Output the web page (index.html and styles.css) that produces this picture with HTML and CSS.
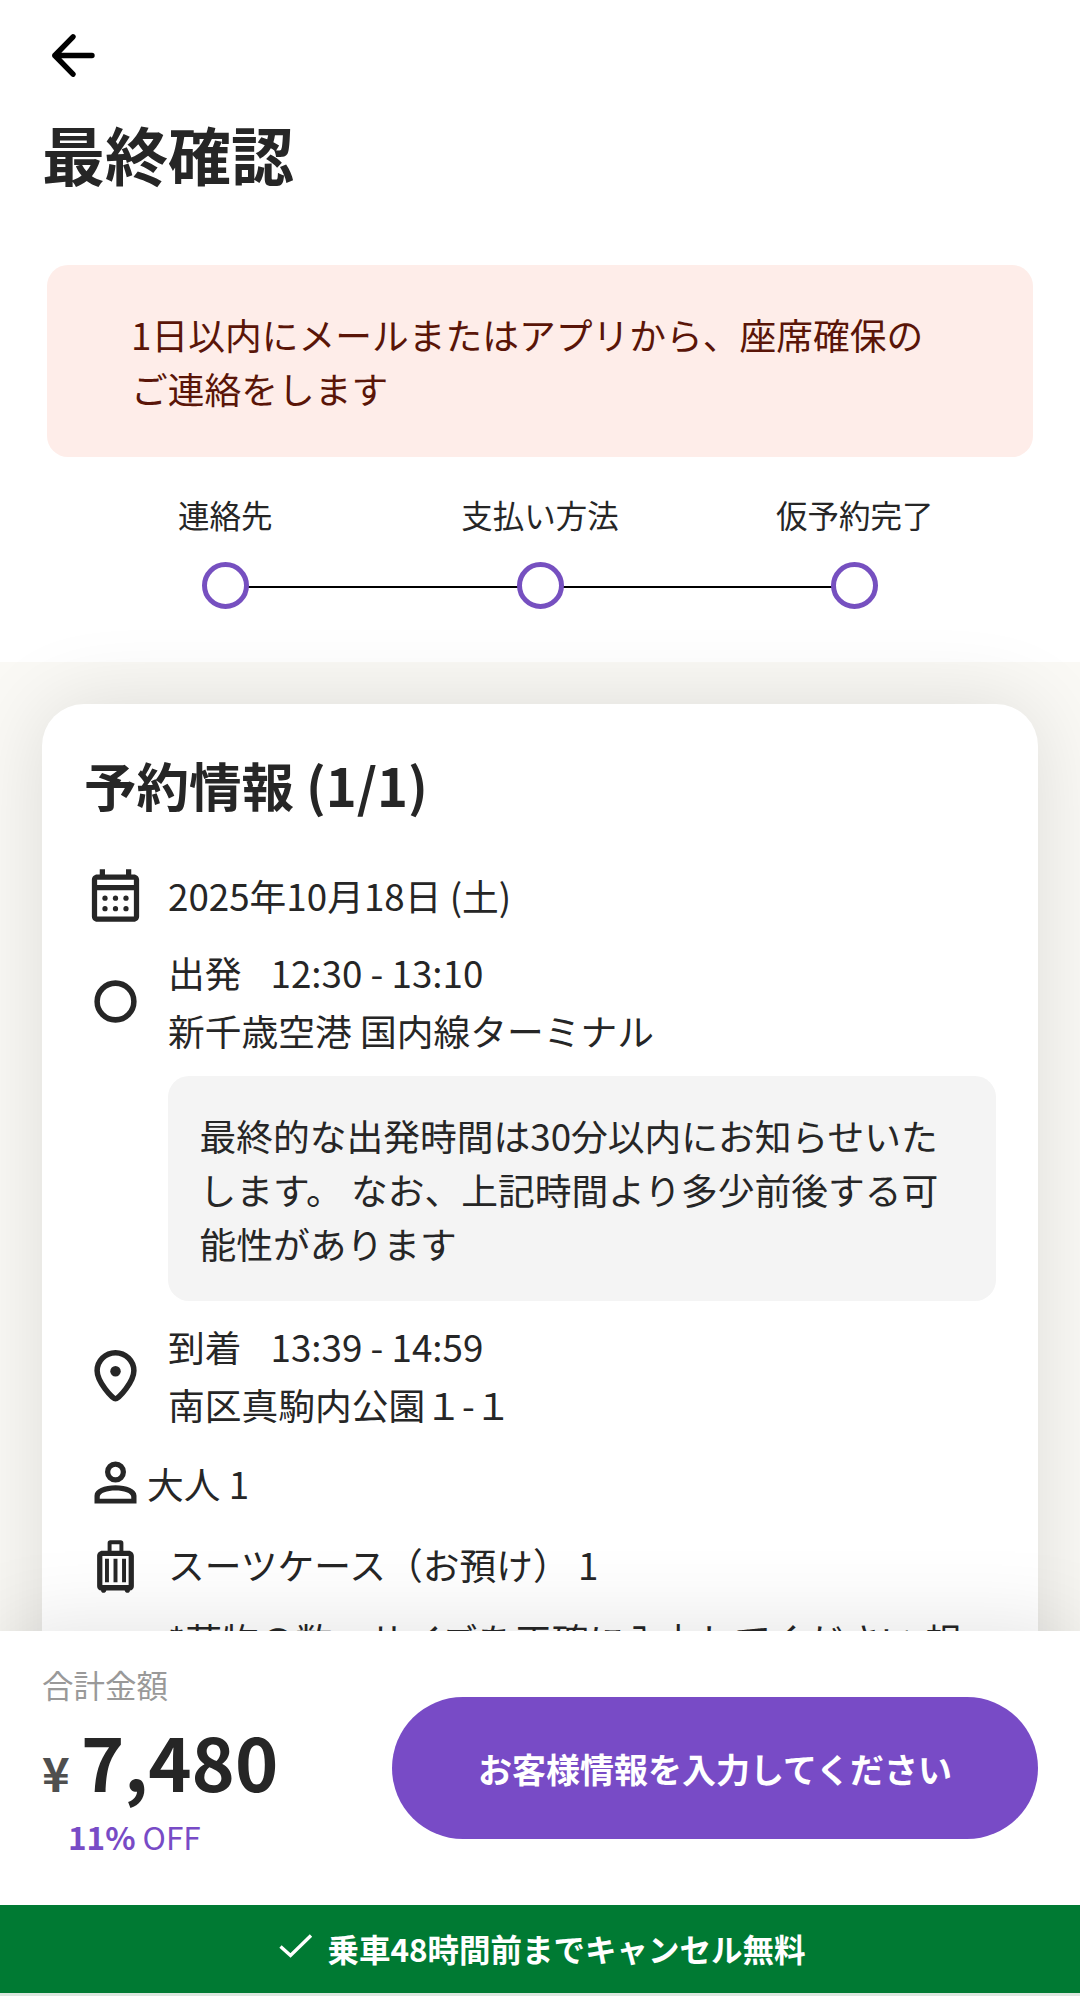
FILE: index.html
```html
<!DOCTYPE html>
<html lang="ja">
<head>
    <meta charset="UTF-8">
    <meta name="viewport" content="width=device-width, initial-scale=1.0">
    <title>最終確認</title>
    <link rel="stylesheet" href="styles.css">
</head>
<body>
    <main class="content">
        <header class="header">
            <svg class="icon" viewBox="0 0 63 63" fill="none" stroke="#000" stroke-width="5.4" stroke-linecap="round" stroke-linejoin="round">
                <path d="M50 31.5H12.8M31 12.8L12.8 31.5L31 50.2"/>
            </svg>
            <h1>最終確認</h1>
            <div class="alert">1日以内にメールまたはアプリから、座席確保の<br>ご連絡をします</div>
            <div class="steps">
                <div class="step"><span>連絡先</span><i class="dot"></i></div>
                <div class="step"><span>支払い方法</span><i class="dot"></i></div>
                <div class="step"><span>仮予約完了</span><i class="dot"></i></div>
            </div>
        </header>

        <div class="booking">
            <section class="card">
                <h2>予約情報 (1/1)</h2>
                <div class="row date">
                    <svg class="icon" viewBox="0 0 24 24" fill="#262626">
                        <path fill-rule="evenodd" d="M6 2h2v2h8V2h2v2h1c1.1 0 2 .9 2 2v14c0 1.1-.9 2-2 2H5c-1.1 0-2-.9-2-2V6c0-1.1.9-2 2-2h1zM5 6v2h14V6zM5 10v10h14V10z"/>
                        <circle cx="8" cy="13" r="1"/><circle cx="12" cy="13" r="1"/><circle cx="16" cy="13" r="1"/>
                        <circle cx="8" cy="17" r="1"/><circle cx="12" cy="17" r="1"/><circle cx="16" cy="17" r="1"/>
                    </svg>
                    <p>2025年10月18日 (土)</p>
                </div>
                <div class="row departure">
                    <svg class="icon" viewBox="0 0 24 24" fill="none" stroke="#262626" stroke-width="2.1">
                        <circle cx="12" cy="12" r="7"/>
                    </svg>
                    <div class="stop">
                        <p>出発<span class="time">12:30 - 13:10</span></p>
                        <p>新千歳空港 国内線ターミナル</p>
                    </div>
                </div>
                <div class="note">最終的な出発時間は30分以内にお知らせいた<br>します。 なお、上記時間より多少前後する可<br>能性があります</div>
                <div class="row arrival">
                    <svg class="icon" viewBox="0 0 24 24" fill="none" stroke="#262626" stroke-width="2.1">
                        <path d="M12 20.9C10.8 20.9 5 14.4 5 10.2A7 6.9 0 0 1 19 10.2C19 14.4 13.2 20.9 12 20.9z"/>
                        <circle cx="12" cy="10.4" r="2" fill="#262626" stroke="none"/>
                    </svg>
                    <div class="stop">
                        <p>到着<span class="time">13:39 - 14:59</span></p>
                        <p>南区真駒内公園１-１</p>
                    </div>
                </div>
                <div class="row passenger">
                    <svg class="icon" viewBox="0 0 24 24" fill="#262626">
                        <path fill-rule="evenodd" d="M12 4a4 4 0 1 1 0 8a4 4 0 0 1 0-8zM12 6a2 2 0 1 0 0 4a2 2 0 0 0 0-4zM12 13c4.2 0 8 1.4 8 4v3H4v-3c0-2.6 3.8-4 8-4zM12 15c-3.2 0-6 .9-6 2.4v.8h12v-.8c0-1.5-2.8-2.4-6-2.4z"/>
                    </svg>
                    <p>大人 1</p>
                </div>
                <div class="row luggage">
                    <svg class="icon" viewBox="0 0 24 24" fill="#262626">
                        <path fill-rule="evenodd" d="M9 6V3c0-.6.4-1 1-1h4c.6 0 1 .4 1 1v3h2c1.1 0 2 .9 2 2v11.5c0 1-.7 1.6-1.5 1.6c0 1.2-1.8 1.2-2 0h-7c-.2 1.2-2 1.2-2 0C5.7 21.1 5 20.5 5 19.5V8c0-1.1.9-2 2-2zM10.5 3.5V6h3V3.5zM7 8v11h10V8z"/>
                        <path d="M8 9h1.5v9H8zM11.25 9h1.5v9h-1.5zM14.5 9H16v9h-1.5z"/>
                    </svg>
                    <p>スーツケース（お預け） 1</p>
                </div>
                <p class="luggage-note">*荷物の数、サイズを正確に入力してください 規</p>
            </section>
        </div>
    </main>

    <footer class="footer">
        <div class="checkout">
            <div class="total">
                <div class="label">合計金額</div>
                <div class="price"><span class="yen">¥</span>7,480</div>
                <div class="discount"><b>11%</b> OFF</div>
            </div>
            <button class="submit">お客様情報を入力してください</button>
        </div>
        <div class="cancel">
            <svg class="check" viewBox="0 0 34 24" fill="none" stroke="#fff" stroke-width="3.4">
                <path d="M1.5 12.5L11.5 21.5L32 1.5"/>
            </svg>
            <span>乗車48時間前までキャンセル無料</span>
        </div>
    </footer>
</body>
</html>
```
FILE: styles.css
```css
* {
    box-sizing: border-box;
}
body {
    display: flex;
    flex-direction: column;
    height: 2016px;
    margin: 0;
    overflow: hidden;
    background-color: #fff;
    color: #262626;
    font-family: "Noto Sans CJK JP", sans-serif;
    font-size: 36.75px;
    line-height: 54px;
}
h1, h2, p {
    margin: 0;
}
.content {
    height: 1631px;
    overflow: hidden;
}
.icon {
    display: block;
    flex: none;
    width: 63px;
    height: 63px;
}

/* header */
.header {
    height: 662px;
    padding: 24px 42px 0;
}
.header h1 {
    margin-top: 22px;
    font-size: 63px;
    line-height: 88px;
}
.alert {
    margin: 68px 5px 0;
    padding: 42px 84px;
    border-radius: 21px;
    background-color: #feede9;
    color: #5a1508;
    white-space: nowrap;
}
.steps {
    display: flex;
    margin: 34px 26px 0;
    font-size: 31.5px;
    line-height: 46px;
}
.step {
    position: relative;
    flex: 1;
    display: flex;
    flex-direction: column;
    align-items: center;
    gap: 25px;
}
.step + .step::before {
    content: "";
    position: absolute;
    right: 50%;
    bottom: 21px;
    width: 100%;
    height: 2px;
    background-color: #000;
}
.dot {
    position: relative;
    z-index: 1;
    width: 47px;
    height: 47px;
    border: 5px solid #7650c0;
    border-radius: 50%;
    background-color: #fff;
}

/* booking card */
.booking {
    padding: 42px;
    background-color: #faf9f5;
}
.card {
    height: 1200px;
    padding: 42px;
    border-radius: 42px;
    background-color: #fff;
    box-shadow: 0 0 84px rgba(0, 0, 0, 0.12);
}
.card h2 {
    margin-bottom: 42px;
    font-size: 52.5px;
    line-height: 76px;
}
.row {
    display: flex;
    align-items: center;
    gap: 21px;
}
.date p {
    margin-bottom: 2px;
}
.stop {
    display: flex;
    flex-direction: column;
    gap: 4px;
}
.time {
    margin-left: 29px;
}
.departure {
    margin-top: 18px;
}
.note {
    margin: 19px 0 18px 84px;
    padding: 31.5px;
    border-radius: 21px;
    background-color: #f4f4f4;
    white-space: nowrap;
}
.passenger {
    gap: 0;
    margin-top: 20px;
}
.luggage {
    margin-top: 21px;
}
.luggage p {
    margin-bottom: 6px;
}
.luggage-note {
    margin: 14px 0 0 84px;
    white-space: nowrap;
}

/* fixed footer */
.footer {
    position: relative;
    height: 385px;
    background-color: #fff;
    box-shadow: 0 0 84px rgba(0, 0, 0, 0.12);
}
.checkout {
    display: flex;
    justify-content: space-between;
    height: 274px;
    padding: 30px 42px 0;
}
.label {
    color: #999;
    font-size: 31.5px;
    line-height: 46px;
}
.price {
    display: flex;
    align-items: baseline;
    height: 80px;
    margin-top: 13px;
    font-size: 73.5px;
    font-weight: bold;
    line-height: 80px;
}
.yen {
    width: 39px;
    padding-bottom: 2px;
    color: #4f4f4f;
    font-size: 47px;
    line-height: 50px;
}
.discount {
    margin: 13px 0 0 26px;
    color: #784bc6;
    font-size: 31.5px;
    line-height: 46px;
}
.submit {
    width: 646px;
    height: 142px;
    margin-top: 36px;
    padding: 0;
    border: none;
    border-radius: 71px;
    background-color: #784bc6;
    color: #fff;
    font-family: inherit;
    font-size: 34px;
    font-weight: bold;
}
.cancel {
    display: flex;
    align-items: center;
    justify-content: center;
    gap: 14px;
    height: 91px;
    padding-left: 5px;
    border-bottom: 3px solid #dce6df;
    background-color: #007a33;
    color: #fff;
    font-size: 31.5px;
    font-weight: bold;
}
.cancel span {
    margin-bottom: 3px;
}
.check {
    width: 34px;
    height: 24px;
    margin-bottom: 6px;
}
```
